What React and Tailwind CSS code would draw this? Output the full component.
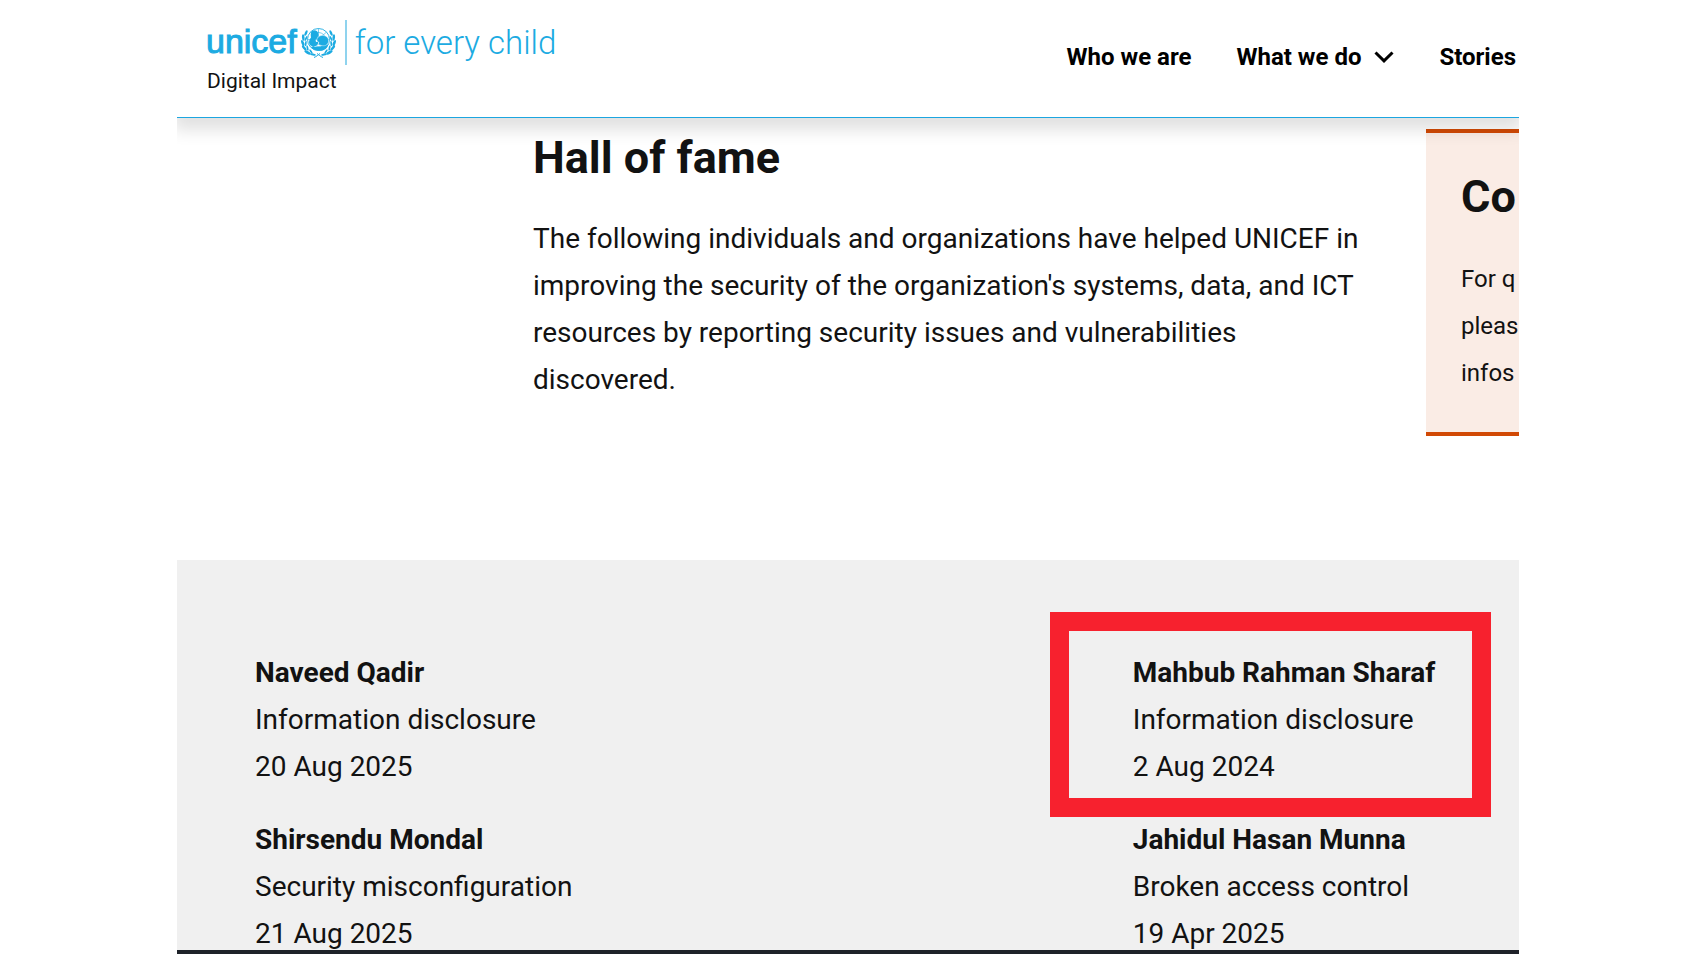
const columns = [
  [
    { name: 'Naveed Qadir', issue: 'Information disclosure', date: '20 Aug 2025' },
    { name: 'Shirsendu Mondal', issue: 'Security misconfiguration', date: '21 Aug 2025' },
  ],
  [
    { name: 'Mahbub Rahman Sharaf', issue: 'Information disclosure', date: '2 Aug 2024', highlighted: true },
    { name: 'Jahidul Hasan Munna', issue: 'Broken access control', date: '19 Apr 2025' },
  ],
]

// One side of the laurel wreath, the other is mirrored
const Laurel = () => (
  <g fill="currentColor">
    <ellipse cx="10" cy="12" rx="2.4" ry="6" transform="rotate(24 10 12)" />
    <ellipse cx="4.5" cy="21" rx="2.6" ry="6.5" transform="rotate(-4 4.5 21)" />
    <ellipse cx="10" cy="23" rx="1.8" ry="5.5" transform="rotate(24 10 23)" />
    <ellipse cx="3.5" cy="32" rx="2.6" ry="6.5" transform="rotate(-20 3.5 32)" />
    <ellipse cx="9.5" cy="33" rx="1.8" ry="5.5" transform="rotate(8 9.5 33)" />
    <ellipse cx="6.5" cy="42" rx="2.6" ry="6.5" transform="rotate(-40 6.5 42)" />
    <ellipse cx="13" cy="42" rx="1.8" ry="5.5" transform="rotate(-12 13 42)" />
    <ellipse cx="13" cy="51" rx="2.6" ry="7" transform="rotate(-60 13 51)" />
    <ellipse cx="20" cy="49" rx="1.8" ry="5" transform="rotate(-36 20 49)" />
    <ellipse cx="24" cy="55" rx="2" ry="6" transform="rotate(-78 24 55)" />
  </g>
)

const Emblem = () => (
  <svg viewBox="0 0 70 62" className="h-[31px] w-[35px]" aria-hidden="true">
    <Laurel />
    <g transform="translate(70 0) scale(-1 1)">
      <Laurel />
    </g>
    <g fill="none" stroke="currentColor">
      <circle cx="35" cy="25" r="22" strokeWidth="1.8" />
      <circle cx="35" cy="25" r="14" strokeWidth="1.2" />
      <path d="M13 25 H57 M35 3 V25 M19 10 L35 25 M51 10 L35 25" strokeWidth="1.2" />
      <path d="M26 61 C31 59 34 56 38 53 M44 61 C39 59 36 56 32 53" strokeWidth="2" />
    </g>
    <g fill="currentColor">
      <path d="M22 8 C26 5 33 6 34 12 C34 14 36 17 34 18 L33 23 L29 25 L30 30 L35 29 L33 36 C27 40 20 39 17 35 C15 31 16 25 20 21 C19 17 19 11 22 8 Z" />
      <path d="M20 40 C24 49 46 51 52 41 L55 35 L46 36 C39 40 30 41 25 38 Z" />
      <path d="M32 28 C31 21 37 17 43 17 C51 17 56 22 55 29 C54 36 48 39 41 37 L34 35 L36 31 Z" stroke="white" strokeWidth="0.8" />
    </g>
  </svg>
)

const Header = () => (
  <header className="relative z-10 flex shrink-0 items-start justify-between border-b border-[#1ca6e0] bg-white pt-5 pr-[3px] pb-5 pl-[29px] shadow-[0_8px_16px_4px_rgba(0,0,0,0.12)]">
    <div>
      <a href="#home" className="flex h-[45px] items-center leading-10 text-[#1cabe2]">
        <span className="pb-1 font-['Liberation_Sans',sans-serif] text-[34px] [-webkit-text-stroke:1px_#1cabe2]">
          unicef
        </span>
        <span className="ml-1">
          <Emblem />
        </span>
        <span className="ml-[9px] h-full w-0.5 bg-[#8fd3ee]" />
        <span className="ml-2 text-[33px] font-light">for every child</span>
      </a>
      <a href="#digital-impact" className="block w-fit pl-px text-[21px] leading-8">Digital Impact</a>
    </div>
    <nav className="flex items-center gap-[45px] pt-[21px] text-2xl leading-8 font-bold text-black">
      <a href="#who">Who we are</a>
      <button type="button" className="flex items-center gap-[13px]">
        What we do
        <svg viewBox="0 0 20 12" className="h-3 w-5" fill="none" stroke="currentColor" strokeWidth="3" aria-hidden="true">
          <path d="M1.5 1.5 L10 9.8 L18.5 1.5" />
        </svg>
      </button>
      <a href="#stories">Stories</a>
    </nav>
  </header>
)

const Entry = ({ name, issue, date, highlighted }) => (
  <li className="relative w-fit">
    <p className="font-bold">{name}</p>
    <p>{issue}</p>
    <p>{date}</p>
    {highlighted && (
      <span className="absolute -top-[37px] -right-14 -bottom-[27px] -left-[83px] border-[19px] border-[#f7212e]" />
    )}
  </li>
)

const App = () => {
  return (
    <div className="h-screen bg-white font-[Roboto,sans-serif] text-[#121212]">
      <div className="mx-auto flex h-full w-full max-w-[1342px] flex-col overflow-hidden">
        <Header />

        <main className="flex min-h-0 flex-1 flex-col">
          <section className="flex shrink-0 items-start gap-12 pb-[124px] pl-[356px]">
            <div className="flex-1 pt-[14px]">
              <h1 className="text-[45px] leading-[52px] font-bold">Hall of fame</h1>
              <p className="mt-[31px] text-[28px] leading-[47px]">
                The following individuals and organizations have helped UNICEF in improving the security of the
                organization's systems, data, and ICT resources by reporting security issues and vulnerabilities
                discovered.
              </p>
            </div>
            {/* runs off the right edge, so nothing here may wrap */}
            <aside className="mt-[11px] w-[93px] shrink-0 overflow-hidden border-y-4 border-[#d14905] bg-[#faece5] pt-[38px] pb-[35px] pl-[35px] whitespace-nowrap">
              <h2 className="text-[45px] leading-[52px] font-bold">Co</h2>
              <p className="mt-[33px] text-2xl leading-[47px]">
                For q
                <br />
                pleas
                <br />
                infos
              </p>
            </aside>
          </section>

          <section className="grid min-h-0 flex-1 grid-cols-[25fr_11fr] overflow-hidden bg-[#f0f0f0] pt-[89px] pl-[78px] text-[28px] leading-[47px]">
            {columns.map((entries, i) => (
              <ul key={i} className="flex flex-col gap-[26px] whitespace-nowrap">
                {entries.map((entry) => (
                  <Entry key={entry.name} {...entry} />
                ))}
              </ul>
            ))}
          </section>
        </main>

        <div className="h-1 shrink-0 bg-[#1e2229]" />
      </div>
    </div>
  )
}

export default App
